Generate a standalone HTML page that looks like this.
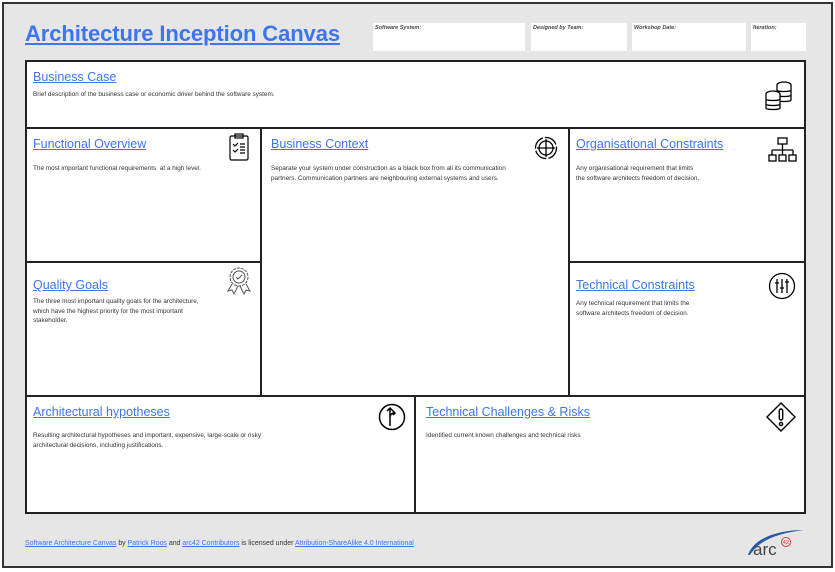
<!DOCTYPE html>
<html><head><meta charset="utf-8"><style>
*{margin:0;padding:0;box-sizing:border-box}
body{width:835px;height:572px;background:#fff;position:relative;overflow:hidden;font-family:"Liberation Sans",sans-serif}
.frame{position:absolute;left:2px;top:2px;width:831px;height:566px;background:#e6e6e6;border:2px solid #333}
.title{position:absolute;left:25px;top:21px;font-size:22px;font-weight:bold;color:#3d74f0;text-decoration:underline;letter-spacing:-0.1px}
.hb{position:absolute;top:23px;height:28px;background:#fff;font-size:5.5px;font-style:italic;font-weight:bold;color:#444;padding:2px}
.c{position:absolute;background:#fff;border:2px solid #222}
.c h2{position:absolute;left:6px;top:8px;font-size:12.5px;font-weight:normal;color:#3d74f0;text-decoration:underline}
.c p{position:absolute;left:6px;top:29px;font-size:6.4px;color:#333;line-height:9.5px}
.c svg{position:absolute}
.foot{position:absolute;left:25px;top:540px;font-size:6.95px;color:#333}
.foot a{color:#3d74f0;text-decoration:underline}
</style></head><body>
<div class="frame"></div>
<div class="title">Architecture Inception Canvas</div>
<div class="hb" style="left:373px;width:152px">Software System:</div>
<div class="hb" style="left:531px;width:96px">Designed by Team:</div>
<div class="hb" style="left:632px;width:114px">Workshop Date:</div>
<div class="hb" style="left:751px;width:55px">Iteration:</div>

<div class="c" style="left:25px;top:60px;width:781px;height:69px"><h2>Business Case</h2><p style="top:28px">Brief description of the business case or economic driver behind the software system.</p>
<svg style="left:736px;top:18px" width="34" height="32" viewBox="0 0 34 32" fill="#fff" stroke="#000" stroke-width="1.3"><ellipse cx="21" cy="5" rx="7" ry="3"/><path d="M14 5v15c0 2 14 2 14 0V5M14 10c0 2 14 2 14 0M14 15c0 2 14 2 14 0"/><path d="M3 14h14v14H3z" stroke="none"/><ellipse cx="10" cy="14" rx="7" ry="3"/><path d="M3 14v14c0 2 14 2 14 0V14M3 19c0 2 14 2 14 0M3 24c0 2 14 2 14 0"/></svg></div>

<div class="c" style="left:25px;top:127px;width:237px;height:136px"><h2>Functional Overview</h2><p style="top:35px">The most important functional requirements&nbsp; at a high level.</p>
<svg style="left:201px;top:4px" width="22" height="28" viewBox="0 0 22 28" fill="none" stroke="#000" stroke-width="1.2"><rect x="2" y="3" width="18" height="24" rx="1.5"/><rect x="7" y="1" width="8" height="4"/><path d="M5 11l2 2 3-3M12 11h5M5 17l2 2 3-3M12 17h5M12 20h5M12 14h5"/></svg></div>

<div class="c" style="left:260px;top:127px;width:310px;height:270px"><h2 style="left:9px">Business Context</h2><p style="left:9px;top:35px">Separate your system under construction as a black box from all its communication<br>partners. Communication partners are neighbouring external systems and users.</p>
<svg style="left:272px;top:7px" width="24" height="24" viewBox="0 0 24 24" fill="none" stroke="#000" stroke-width="1.3"><circle cx="12" cy="12" r="10.5" stroke-dasharray="14 2"/><circle cx="12" cy="12" r="7"/><path d="M12 3v18M3 12h18"/></svg></div>

<div class="c" style="left:568px;top:127px;width:238px;height:136px"><h2>Organisational Constraints</h2><p style="top:35px">Any organisational requirement that limits<br>the software architects freedom of decision.</p>
<svg style="left:198px;top:8px" width="30" height="28" viewBox="0 0 30 28" fill="#fff" stroke="#000" stroke-width="1.3"><rect x="10" y="1" width="9" height="6"/><path d="M14.5 7v6M4 13h21M4 13v5M14.5 13v5M25 13v5"/><rect x="1" y="18" width="7" height="6"/><rect x="11" y="18" width="7" height="6"/><rect x="21" y="18" width="7" height="6"/></svg></div>

<div class="c" style="left:25px;top:261px;width:237px;height:136px"><h2 style="top:15px">Quality Goals</h2><p style="top:34px">The three most important quality goals for the architecture,<br>which have the highest priority for the most important<br>stakeholder.</p>
<svg style="left:199px;top:3px" width="26" height="30" viewBox="0 0 26 30" fill="none" stroke="#555" stroke-width="1"><circle cx="13" cy="11" r="9" stroke-dasharray="3 1"/><circle cx="13" cy="11" r="6"/><path d="M10 11l2 2 4-4M6 18l-4 7 4-1 2 4 4-8M20 18l4 7-4-1-2 4-4-8"/></svg></div>

<div class="c" style="left:568px;top:261px;width:238px;height:136px"><h2 style="top:15px">Technical Constraints</h2><p style="top:36px">Any technical requirement that limits the<br>software architects freedom of decision.</p>
<svg style="left:198px;top:9px" width="28" height="28" viewBox="0 0 28 28" fill="none" stroke="#000" stroke-width="1.3"><circle cx="14" cy="14" r="12.5"/><path d="M9 7v14M14 7v14M19 7v14M7 11h4M12 16h4M17 10h4"/></svg></div>

<div class="c" style="left:25px;top:395px;width:391px;height:119px"><h2>Architectural hypotheses</h2><p style="top:34px">Resulting architectural hypotheses and important, expensive, large-scale or risky<br>architectural decisions, including justifications.</p>
<svg style="left:351px;top:6px" width="28" height="28" viewBox="0 0 28 28" fill="none" stroke="#000" stroke-width="1.5"><circle cx="14" cy="14" r="12.5"/><path d="M12 23V5M9 8l3-3 3 3M12 15c0-4 2-5 5-5M15 8l2 2-2 2"/></svg></div>

<div class="c" style="left:414px;top:395px;width:392px;height:119px"><h2 style="left:10px">Technical Challenges &amp; Risks</h2><p style="left:10px;top:34px">Identified current known challenges and technical risks</p>
<svg style="left:350px;top:5px" width="30" height="30" viewBox="0 0 30 30" fill="none" stroke="#000" stroke-width="1.4"><path d="M15 1L29 15 15 29 1 15z"/><rect x="13.3" y="7" width="3.4" height="11" rx="1.7"/><circle cx="15" cy="22" r="1.6"/></svg></div>

<div class="foot"><a>Software Architecture Canvas</a> by <a>Patrick Roos</a> and <a>arc42 Contributors</a> is licensed under <a>Attribution-ShareAlike 4.0 International</a></div>
<svg style="position:absolute;left:740px;top:527px" width="66" height="32" viewBox="0 0 66 32"><path d="M8 28C14 10 40 3 64 3 40 6 20 12 10 28z" fill="#2a5aa8"/><text x="13" y="28" font-family="Liberation Sans,sans-serif" font-size="17" fill="#444">arc</text><circle cx="46" cy="15" r="4.5" fill="none" stroke="#d33" stroke-width="1"/><text x="42.8" y="17" font-family="Liberation Sans,sans-serif" font-size="5.5" fill="#d33">42</text></svg>
</body></html>
